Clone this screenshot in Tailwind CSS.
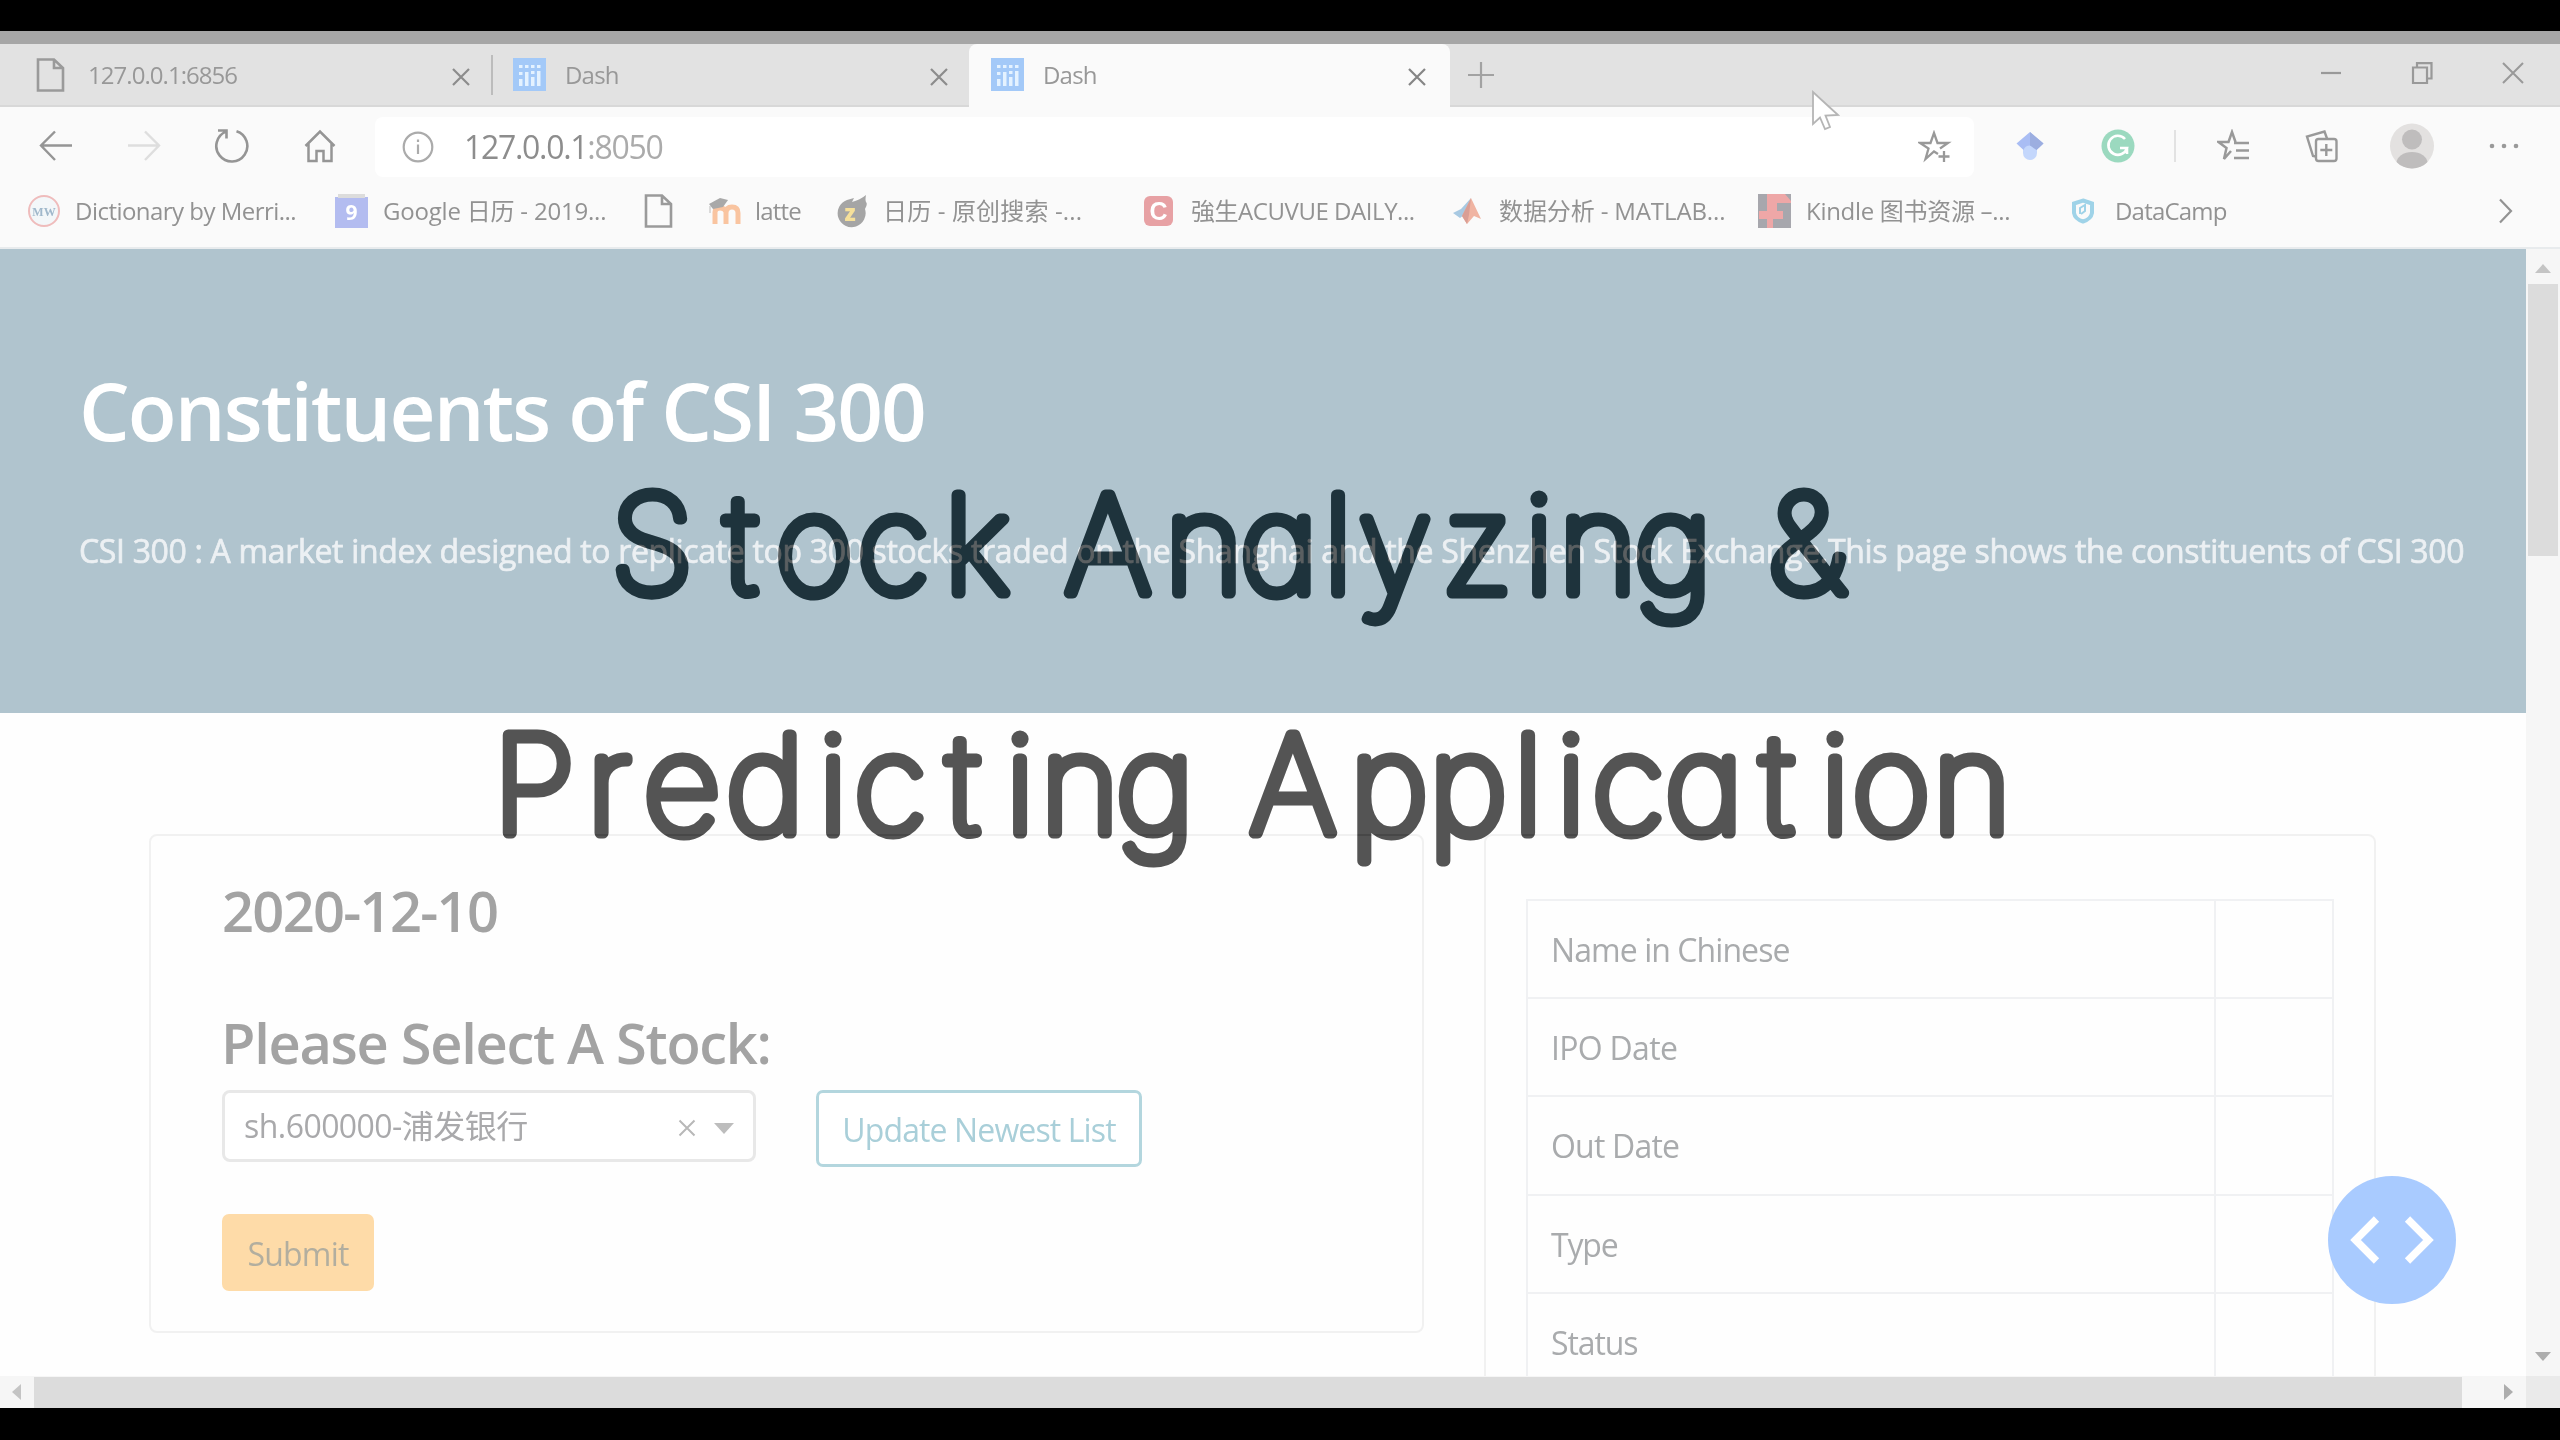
<!DOCTYPE html>
<html lang="en">
<head>
<meta charset="utf-8">
<title>Dash</title>
<script src="https://cdn.jsdelivr.net/npm/@tailwindcss/browser@4"></script>
</head>
<body class="bg-black overflow-hidden font-['Open_Sans','Noto_Sans_CJK_SC',sans-serif] text-[#929292]">
<div class="relative w-[2560px] h-[1440px] pt-[31px] pb-[32px] flex flex-col whitespace-nowrap">
  <div class="h-[13px] bg-[#a6a6a6] shrink-0"></div>

  <!-- tab strip -->
  <div class="h-[63px] bg-[#e2e2e2] border-b-2 border-[#d8d8d8] shrink-0 flex text-[24px] leading-[61px] text-[#989898]">
    <div class="w-[491px] pl-[36px] flex items-center shrink-0">
      <svg class="w-[29px] h-[34px]" viewBox="0 0 29 34" fill="none" stroke="#9a9a9a" stroke-width="2.6"><path d="M2 1.5H18L27 10V32.5H2ZM18 1.5V10H27"/></svg>
      <span class="ml-[23px] w-[363px] tracking-[-0.95px]">127.0.0.1:6856</span>
      <svg class="w-[20px] h-[20px] mt-[4px]" viewBox="0 0 20 20" stroke="#8c8c8c" stroke-width="2.2"><path d="M2 2L18 18M18 2L2 18"/></svg>
    </div>
    <div class="w-[478px] flex items-center shrink-0">
      <span class="w-[2px] h-[40px] bg-[#bcbcbc] mr-[20px]"></span>
      <svg class="w-[33px] h-[33px]" viewBox="0 0 33 33"><rect width="33" height="33" fill="#a3c9f8"/><g fill="#e4f2ff"><rect x="6" y="21" width="3.5" height="7"/><rect x="12" y="14" width="3.5" height="14"/><rect x="18" y="19" width="3.5" height="9"/><rect x="24" y="13" width="3.5" height="15"/><rect x="6" y="7" width="3.5" height="3"/><rect x="12" y="7" width="3.5" height="3"/><rect x="18" y="7" width="3.5" height="3"/><rect x="24" y="7" width="3.5" height="3"/><rect x="6" y="14" width="3.5" height="3"/><rect x="18" y="13" width="3.5" height="3"/></g></svg>
      <span class="ml-[19px] w-[364px] tracking-[-0.8px]">Dash</span>
      <svg class="w-[20px] h-[20px] mt-[4px]" viewBox="0 0 20 20" stroke="#8c8c8c" stroke-width="2.2"><path d="M2 2L18 18M18 2L2 18"/></svg>
    </div>
    <div class="w-[481px] h-[63px] bg-[#fafafa] rounded-t-[8px] flex items-center pl-[22px] pb-[2px] shrink-0">
      <svg class="w-[33px] h-[33px]" viewBox="0 0 33 33"><rect width="33" height="33" fill="#a3c9f8"/><g fill="#e4f2ff"><rect x="6" y="21" width="3.5" height="7"/><rect x="12" y="14" width="3.5" height="14"/><rect x="18" y="19" width="3.5" height="9"/><rect x="24" y="13" width="3.5" height="15"/><rect x="6" y="7" width="3.5" height="3"/><rect x="12" y="7" width="3.5" height="3"/><rect x="18" y="7" width="3.5" height="3"/><rect x="24" y="7" width="3.5" height="3"/><rect x="6" y="14" width="3.5" height="3"/><rect x="18" y="13" width="3.5" height="3"/></g></svg>
      <span class="ml-[19px] w-[364px] tracking-[-0.8px]">Dash</span>
      <svg class="w-[20px] h-[20px] mt-[4px]" viewBox="0 0 20 20" stroke="#858585" stroke-width="2.2"><path d="M2 2L18 18M18 2L2 18"/></svg>
    </div>
    <div class="flex-1 flex items-center">
      <svg class="w-[28px] h-[28px] ml-[17px]" viewBox="0 0 28 28" stroke="#a2a2a2" stroke-width="2.2"><path d="M14 1V27M1 14H27"/></svg>
      <svg class="w-[22px] h-[22px] ml-[825px] mt-[-4px]" viewBox="0 0 22 22" stroke="#999" stroke-width="2.2"><path d="M1 11H21"/></svg>
      <svg class="w-[22px] h-[22px] ml-[69px] mt-[-3px]" viewBox="0 0 22 22" fill="none" stroke="#999" stroke-width="2.2"><path d="M2 5.5H16V21H2ZM6 5V1.2H20.5V16.5H16.5"/></svg>
      <svg class="w-[22px] h-[22px] ml-[69px] mt-[-3px]" viewBox="0 0 22 22" stroke="#999" stroke-width="2"><path d="M1 1L21 21M21 1L1 21"/></svg>
    </div>
  </div>

  <!-- toolbar -->
  <div class="h-[78px] bg-[#fafafa] shrink-0 flex items-center">
    <svg class="w-[34px] h-[32px] ml-[39px]" viewBox="0 0 34 32" fill="none" stroke="#959595" stroke-width="2.4"><path d="M33 15.500H2M16 1.500L2 15.500L16 30"/></svg>
    <svg class="w-[34px] h-[32px] ml-[54px]" viewBox="0 0 34 32" fill="none" stroke="#dedede" stroke-width="2.4"><path d="M1 15.500H32M18 1.500L32 15.500L18 30"/></svg>
    <svg class="w-[36px] h-[36px] ml-[53px]" viewBox="0 0 36 36" fill="none" stroke="#959595" stroke-width="2.600"><path d="M22.500 3.200A15.500 15.500 0 1 1 12 3.600M4 2.500H12.500V10.500"/></svg>
    <svg class="w-[32px] h-[34px] ml-[54px]" viewBox="0 0 32 34" fill="none" stroke="#959595" stroke-width="2.500"><path d="M1.500 17L16 2.500L30.500 17M4.500 14.500V32H12.500V22H19.500V32H27.500V14.500"/></svg>
    <div class="ml-[39px] w-[1599px] h-[60px] mt-[1px] rounded-[8px] bg-white flex items-center">
      <svg class="w-[32px] h-[32px] ml-[27px]" viewBox="0 0 32 32" fill="none" stroke="#ababab" stroke-width="2.200"><circle cx="16" cy="16" r="14.300"/><path d="M16 13.500V23M16 8.500V11"/></svg>
      <span class="ml-[30px] w-[1454px] text-[32px] leading-[58px] tracking-[-1.3px] text-[#8d8d8d]">127.0.0.1<span class="text-[#ababab]">:8050</span></span>
      <svg class="w-[34px] h-[34px]" viewBox="0 0 34 34" fill="none" stroke="#999" stroke-width="2.300"><path d="M20 24L16 21.500L7.500 29L10.500 18.500L2 13H12.500L16 3L19.500 13H30L22 18.500M26 21V32M20.500 26.500H31.500"/></svg>
    </div>
    <svg class="w-[30px] h-[30px] ml-[41px]" viewBox="0 0 30 30"><path d="M8 14H22V22A7 7 0 0 1 8 22Z" fill="#c4d7fc"/><path d="M15 1L1.500 12.500L8.500 19A7 7 0 0 1 21.500 19L28.500 12.500Z" fill="#a9bdf4"/><path d="M15 1L28.500 12.500L21.500 19L15 14.500Z" fill="#9caee0"/></svg>
    <svg class="w-[34px] h-[34px] ml-[56px]" viewBox="0 0 34 34" fill="none"><circle cx="17" cy="17" r="16.500" fill="#9bd9bf"/><path d="M24 10A9.500 9.500 0 1 0 26 19H19M26 19V25" stroke="#fff" stroke-width="2.600"/></svg>
    <span class="w-[2px] h-[32px] bg-[#e2e2e2] ml-[39px]"></span>
    <svg class="w-[34px] h-[34px] ml-[41px]" viewBox="0 0 34 34" fill="none" stroke="#999" stroke-width="2.500"><path d="M14 22L7 30L9.500 19L1.500 13H11.500L15 3L18.500 13M17 14H32M19 21.500H32M17 29H32"/></svg>
    <svg class="w-[34px] h-[34px] ml-[54px]" viewBox="0 0 34 34" fill="none" stroke="#999" stroke-width="2.400"><rect x="11" y="10" width="20.500" height="22" rx="2.500"/><path d="M21.300 15V27M15.300 21H27.300M11 27.500L8 27L2 7.500L19.500 2.500L22 9.500"/></svg>
    <svg class="w-[44px] h-[46px] ml-[51px]" viewBox="0 0 44 46"><clipPath id="av"><ellipse cx="22" cy="23" rx="22" ry="22.500"/></clipPath><g clip-path="url(#av)"><rect width="44" height="46" fill="#e3e1e0"/><circle cx="22" cy="16.500" r="10" fill="#bfbdbd"/><ellipse cx="22" cy="40" rx="15.500" ry="11" fill="#bfbdbd"/></g></svg>
    <svg class="w-[30px] h-[6px] ml-[55px]" viewBox="0 0 30 6" fill="#999"><circle cx="3" cy="3" r="2.300"/><circle cx="15" cy="3" r="2.300"/><circle cx="27" cy="3" r="2.300"/></svg>
  </div>

  <!-- bookmarks bar -->
  <div class="h-[64px] bg-[#fafafa] border-b-2 border-[#e8ebed] shrink-0 flex items-center pb-[10px] pl-[27px] text-[24px] leading-[50px]">
    <svg class="w-[34px] h-[34px]" viewBox="0 0 34 34"><circle cx="17" cy="17" r="15" fill="#f3f7f9" stroke="#efbcbc" stroke-width="2"/><text x="17" y="21.500" text-anchor="middle" font-size="12" font-weight="700" fill="#a0b8cb" font-family="Liberation Serif">MW</text></svg>
    <span class="ml-[14px] w-[260px] tracking-[-0.53px]">Dictionary by Merri...</span>
    <svg class="w-[33px] h-[34px]" viewBox="0 0 33 34"><path d="M0 3H33V34H0Z" fill="#b3bcf0"/><path d="M3 0H30V4H3Z" fill="#dcdcdc"/><text x="16.500" y="26" text-anchor="middle" font-size="21" font-weight="700" fill="#fff" font-family="Open Sans">9</text></svg>
    <span class="ml-[15px] w-[261px] tracking-[-0.2px]">Google 日历 - 2019...</span>
    <svg class="w-[29px] h-[34px]" viewBox="0 0 29 34" fill="none" stroke="#9a9a9a" stroke-width="2.600"><path d="M2 1.500H18L27 10V32.500H2ZM18 1.500V10H27"/></svg>
    <svg class="w-[34px] h-[28px] ml-[35px]" viewBox="0 0 34 28" fill="none"><path d="M7 27V15Q7 11 12 11Q17 11 18 15V27M18 16Q18 10 24 10Q30 10 30 16V27" stroke="#f9c4a0" stroke-width="5"/><path d="M1 7L12 1L20 3L15 10L5 12Z" fill="#a9a9a9"/><path d="M2 9V16" stroke="#bbb"/></svg>
    <span class="ml-[13px] w-[79px] tracking-[-0.8px]">latte</span>
    <svg class="w-[34px] h-[34px]" viewBox="0 0 34 34"><path d="M32 1Q31 6 32 8Q34 10 31 15A14 14 0 1 1 13 6L20 4L18 8Q26 6 32 1Z" fill="#a5a5a5"/><text x="16" y="27" text-anchor="middle" font-size="22" font-weight="800" fill="#f6e09a" font-family="Open Sans">z</text></svg>
    <span class="ml-[15px] w-[261px] tracking-[0.15px]">日历 - 原创搜索 -...</span>
    <svg class="w-[29px] h-[30px]" viewBox="0 0 29 30"><rect width="29" height="30" rx="6" fill="#e7a1a4"/><text x="14.500" y="24" text-anchor="middle" font-size="25" font-weight="700" fill="#fff" font-family="Liberation Sans">C</text></svg>
    <span class="ml-[18px] w-[261px] tracking-[-0.45px]">強生ACUVUE DAILY...</span>
    <svg class="w-[30px] h-[28px]" viewBox="0 0 30 28"><path d="M1 16L9 12L19 1L12 18L8 21Z" fill="#a8c9e2"/><path d="M19 1L29 22L22 19L15 27L10 19Z" fill="#f0b4a2"/><path d="M19 1L17 18L15 27L10 19Z" fill="#d99e94"/></svg>
    <span class="ml-[17px] w-[259px] tracking-[-0.12px]">数据分析 - MATLAB...</span>
    <svg class="w-[33px] h-[34px]" viewBox="0 0 33 34"><path d="M0 0H33V34H0Z" fill="#a7a7ad"/><path d="M9 0H27L33 7V9H19V17H25V25H15V34H9V25H1V17H9Z" fill="#eea7a7"/></svg>
    <span class="ml-[15px] w-[265px] tracking-[-0.3px]">Kindle 图书资源 –...</span>
    <svg class="w-[24px] h-[26px]" viewBox="0 0 24 26" fill="none" stroke="#9fd3e8" stroke-width="4"><path d="M12 2.500L21 5.500V15Q20 21 12 23.500Q4 21 3 15V5.500Z"/><path d="M9 16V10L14 7V13L10 16" stroke-width="2"/></svg>
    <span class="ml-[20px] w-[383px] tracking-[-0.8px]">DataCamp</span>
    <svg class="w-[16px] h-[26px]" viewBox="0 0 16 26" fill="none" stroke="#939393" stroke-width="2.200"><path d="M2 1.500L13 13L2 24.500"/></svg>
  </div>

  <!-- viewport -->
  <div class="flex h-[1127px] shrink-0">
    <div class="w-[2526px] bg-[#fefefe] overflow-hidden relative">
      <div class="h-[464px] bg-[#b0c4ce] pl-[79px] pt-[111px]">
        <h1 class="text-[80px] leading-[100px] font-semibold tracking-[-1.9px] text-white">Constituents of CSI 300</h1>
        <p class="mt-[75px] text-[32px] leading-[32px] tracking-[-0.33px] [-webkit-text-stroke:0.7px_#ecf0f3] text-[#ecf0f3]">CSI 300 : A market index designed to replicate top 300 stocks traded on the Shanghai and the Shenzhen Stock Exchange.This page shows the constituents of CSI 300</p>
      </div>
      <div class="flex pl-[149px] pt-[121px] items-start">
        <div class="w-[1275px] h-[499px] border-2 border-[#f1f1f1] rounded-[8px] pl-[71px] pt-[44px]">
          <h3 class="text-[56px] leading-[60px] font-semibold tracking-[-1.7px] text-[#a3a3a3]">2020-12-10</h3>
          <h3 class="mt-[72px] ml-[-1px] text-[56px] leading-[60px] font-semibold tracking-[-1.3px] text-[#a3a3a3]">Please Select A Stock:</h3>
          <div class="mt-[18px] flex items-start gap-[60px] text-[32px]">
            <div class="w-[534px] h-[72px] border-[3px] border-[#e8e8e8] rounded-[8px] bg-white flex items-center pl-[19px] leading-[68px] text-[#a9a9ab]">
              <span class="w-[434px] tracking-[-0.55px]">sh.600000-浦发银行</span>
              <svg class="w-[18px] h-[18px] mt-[4px]" viewBox="0 0 18 18" stroke="#b8b8b8" stroke-width="2"><path d="M1.500 1.500L16.500 16.500M16.500 1.500L1.500 16.500"/></svg>
              <svg class="w-[20px] h-[11px] ml-[18px] mt-[4px]" viewBox="0 0 20 11" fill="#bdbdbd"><path d="M0 0H20L10 11Z"/></svg>
            </div>
            <button class="w-[326px] h-[77px] border-[3px] border-[#b3d6de] rounded-[7px] tracking-[-0.88px] text-[#a9cfd9] bg-white leading-[73px]">Update Newest List</button>
          </div>
          <button class="mt-[47px] w-[152px] h-[77px] rounded-[7px] bg-[#fedba8] text-[32px] tracking-[-0.8px] text-[#b2ae9f] leading-[79px]">Submit</button>
        </div>
        <div class="ml-[60px] w-[892px] h-[700px] border-2 border-[#f1f1f1] rounded-[8px] pl-[40px] pt-[63px]">
          <div class="w-[808px] border-2 border-b-0 border-[#f0f1f3] text-[32px] text-[#a9abad] leading-[98px]">
            <div class="flex h-[98px] border-b-2 border-[#f0f1f3]"><div class="w-[688px] pl-[23px] border-r-2 border-[#f0f1f3] tracking-[-0.93px]">Name in Chinese</div></div>
            <div class="flex h-[98px] border-b-2 border-[#f0f1f3]"><div class="w-[688px] pl-[23px] border-r-2 border-[#f0f1f3] tracking-[-0.7px]">IPO Date</div></div>
            <div class="flex h-[99px] border-b-2 border-[#f0f1f3]"><div class="w-[688px] pl-[23px] border-r-2 border-[#f0f1f3] tracking-[-0.8px]">Out Date</div></div>
            <div class="flex h-[98px] border-b-2 border-[#f0f1f3]"><div class="w-[688px] pl-[23px] border-r-2 border-[#f0f1f3] tracking-[-1.2px]">Type</div></div>
            <div class="flex h-[98px] border-b-2 border-[#f0f1f3]"><div class="w-[688px] pl-[23px] border-r-2 border-[#f0f1f3] tracking-[-1.1px]">Status</div></div>
          </div>
        </div>
      </div>
      <!-- debug menu button -->
      <div class="absolute left-[2328px] top-[927px] w-[128px] h-[128px] rounded-full bg-[#a9cbff] flex items-center justify-center">
        <svg class="w-[84px] h-[48px]" viewBox="0 0 84 48" fill="none" stroke="#fff" stroke-width="7.500"><path d="M26.500 3L5.500 24L26.500 45M57.500 3L78.500 24L57.500 45"/></svg>
      </div>
    </div>
    <div class="w-[34px] bg-[#f6f6f6] flex flex-col items-center pt-[15px]">
      <svg class="w-[16px] h-[9px]" viewBox="0 0 16 9" fill="#c4c4c4"><path d="M0 9H16L8 0Z"/></svg>
      <div class="w-[30px] h-[272px] mt-[11px] bg-[#dcdcdc]"></div>
      <svg class="w-[16px] h-[9px] mt-[796px]" viewBox="0 0 16 9" fill="#adadad"><path d="M0 0H16L8 9Z"/></svg>
    </div>
  </div>
  <div class="h-[32px] bg-[#f6f6f6] shrink-0 flex items-center">
    <svg class="w-[9px] h-[16px] ml-[12px]" viewBox="0 0 9 16" fill="#c4c4c4"><path d="M9 0V16L0 8Z"/></svg>
    <div class="ml-[13px] w-[2428px] h-[31px] bg-[#dcdcdc]"></div>
    <svg class="w-[9px] h-[16px] ml-[42px]" viewBox="0 0 9 16" fill="#adadad"><path d="M0 0V16L9 8Z"/></svg>
    <div class="ml-[13px] w-[34px] h-[32px] bg-[#eaeaea]"></div>
  </div>

  <!-- mouse pointer -->
  <svg class="absolute left-[1811px] top-[90px] w-[30px] h-[42px]" viewBox="0 0 30 42"><path d="M2 2V34L9 27.500L14 39L19 37L14.500 25.500L27 25Z" fill="#fff" stroke="#b5b5b5" stroke-width="1.800"/></svg>

  <!-- title card -->
  <svg class="absolute left-0 top-0 w-[2560px] h-[1440px] mix-blend-difference font-['Comic_Sans_MS','Inter',sans-serif] font-thin [font-feature-settings:'cv11','ss03']" viewBox="0 0 2560 1440" font-size="135" text-anchor="middle" stroke-linejoin="round" stroke-linecap="round" stroke-width="11">
    <text y="593" fill="#929192" stroke="#929192" x="652 741 814 893 977 1026 1108 1204 1279 1338 1395 1477 1539 1598 1673 1740 1807">Stock Analyzing &amp;</text>
    <text y="833" fill="#aaa" stroke="#aaa" x="534 609 682 765 833 890 963 1020 1080 1155 1220 1293 1389 1468 1528 1571 1628 1704 1777 1835 1891 1972">Predicting Application</text>
  </svg>
</div>
</body>
</html>
